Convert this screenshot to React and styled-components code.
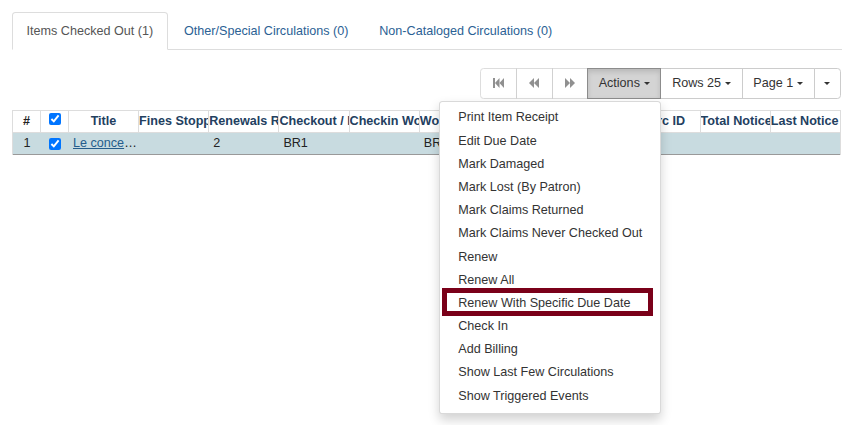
import React from 'react';
import styled, { createGlobalStyle, css } from 'styled-components';

const GlobalStyle = createGlobalStyle`
  html, body { margin: 0; padding: 0; background: #fff; }
  body {
    font-family: "Liberation Sans", Arial, sans-serif;
    font-size: 12.6px;
    line-height: 18px;
    color: #333;
  }
  * { box-sizing: border-box; }
`;

const Page = styled.div`
  position: relative;
  min-height: 425px;
  padding: 12px 4px 0 12px;
`;

const Tabs = styled.ul`
  display: flex;
  list-style: none;
  margin: 0;
  padding: 0;
  border-bottom: 1px solid #ddd;
`;

const Tab = styled.li`
  margin-right: 1.8px;
  margin-bottom: -1px;
  padding: 9px 13.5px;
  line-height: 18px;
  border: 1px solid transparent;
  border-radius: 3.6px 3.6px 0 0;
  color: #2b6194;
  ${(p) =>
    p.$active &&
    css`
      color: #555;
      background: #fff;
      border-color: #ddd #ddd transparent;
    `}
`;

const Toolbar = styled.div`
  position: relative;
  z-index: 5;
  display: flex;
  justify-content: flex-end;
  margin-top: 18px;
  padding-right: 1px;
`;

const BtnGroup = styled.div`
  display: flex;
`;

const Slot = styled.div`
  position: relative;
  display: flex;
  margin-left: ${(p) => (p.$first ? '0' : '-1px')};
  z-index: ${(p) => (p.$raised ? 2 : 1)};
`;

const Btn = styled.button`
  font: inherit;
  line-height: 18px;
  padding: 5.4px ${(p) => p.$px || '10.8px'};
  border: 1px solid #ccc;
  background: #fff;
  color: #333;
  display: flex;
  align-items: center;
  gap: 3.6px;
  border-radius: ${(p) =>
    p.$first ? '3.6px 0 0 3.6px' : p.$last ? '0 3.6px 3.6px 0' : '0'};
  ${(p) =>
    p.$disabled &&
    css`
      opacity: 0.65;
    `}
  ${(p) =>
    p.$active &&
    css`
      background: #d4d4d4;
      border-color: #8c8c8c;
      box-shadow: inset 0 3px 5px rgba(0, 0, 0, 0.125);
    `}
`;

const Caret = styled.span`
  display: inline-block;
  width: 0;
  height: 0;
  margin-top: 1px;
  border-top: 3.6px solid;
  border-left: 3.6px solid transparent;
  border-right: 3.6px solid transparent;
`;

const Menu = styled.ul`
  position: absolute;
  top: calc(100% + 2.5px);
  right: 0;
  z-index: 10;
  list-style: none;
  margin: 0;
  padding: 4.5px 0;
  background: #fff;
  border: 1px solid rgba(0, 0, 0, 0.15);
  border-radius: 3.6px;
  box-shadow: 0 5.4px 10.8px rgba(0, 0, 0, 0.175);
  white-space: nowrap;
`;

const MenuItem = styled.li`
  position: relative;
  padding: 2.7px 18px 2.7px 18.5px;
  line-height: 17.8px;
  color: #333;
  ${(p) =>
    p.$highlight &&
    css`
      &::after {
        content: '';
        position: absolute;
        left: 2px;
        right: 7px;
        top: -4px;
        bottom: -1px;
        border: 5px solid #7a0019;
      }
    `}
`;

const COLS = '28px 28px 70px repeat(10, 70.2px)';

const Table = styled.div`
  margin-top: 11.4px;
  width: 829px;
  border-left: 1px solid #ddd;
  border-right: 1px solid #ddd;
`;

const HeaderRow = styled.div`
  display: grid;
  grid-template-columns: ${COLS};
  height: 22px;
  border-top: 1px solid #ddd;
`;

const HeadCell = styled.div`
  font-weight: bold;
  color: ${(p) => (p.$dark ? '#222' : '#23405f')};
  text-align: center;
  white-space: nowrap;
  overflow: hidden;
  line-height: 21px;
  border-right: ${(p) => (p.$last ? 'none' : '1px solid #ddd')};
  display: flex;
  justify-content: ${(p) => (p.$center ? 'center' : 'flex-start')};
  align-items: ${(p) => (p.$box ? 'flex-start' : 'stretch')};
  padding-top: ${(p) => (p.$box ? '2px' : '0')};
`;

const DataRow = styled.div`
  display: grid;
  grid-template-columns: ${COLS};
  height: 23px;
  background: #c8dbe0;
  border-top: 1px solid #ddd;
  border-bottom: 1px solid #999;
`;

const Cell = styled.div`
  white-space: nowrap;
  overflow: hidden;
  text-overflow: ellipsis;
  line-height: 21px;
  color: #222;
  padding: 0 ${(p) => (p.$tight ? '2px' : '4px')} 0 4px;
  text-align: ${(p) => (p.$center ? 'center' : 'left')};
  display: ${(p) => (p.$box ? 'flex' : 'block')};
  justify-content: center;
  align-items: center;
`;

const TitleLink = styled.a`
  color: #255d8c;
  text-decoration: underline;
`;

const Check = styled.input`
  width: 12px;
  height: 12px;
  margin: 0;
  accent-color: #0075ff;
`;

const NavIcon = ({ kind }) => {
  const fill = '#555';
  if (kind === 'first')
    return (
      <svg width="11" height="10" viewBox="0 0 11 10">
        <rect x="0" y="0" width="2" height="10" fill={fill} />
        <polygon points="2,5 6.5,0 6.5,10" fill={fill} />
        <polygon points="6.5,5 11,0 11,10" fill={fill} />
      </svg>
    );
  if (kind === 'prev')
    return (
      <svg width="10" height="10" viewBox="0 0 10 10">
        <polygon points="0,5 5,0 5,10" fill={fill} />
        <polygon points="5,5 10,0 10,10" fill={fill} />
      </svg>
    );
  return (
    <svg width="10" height="10" viewBox="0 0 10 10">
      <polygon points="10,5 5,0 5,10" fill={fill} />
      <polygon points="5,5 0,0 0,10" fill={fill} />
    </svg>
  );
};

const actions = [
  'Print Item Receipt',
  'Edit Due Date',
  'Mark Damaged',
  'Mark Lost (By Patron)',
  'Mark Claims Returned',
  'Mark Claims Never Checked Out',
  'Renew',
  'Renew All',
  'Renew With Specific Due Date',
  'Check In',
  'Add Billing',
  'Show Last Few Circulations',
  'Show Triggered Events',
];

const headers = [
  'Fines Stopped',
  'Renewals Remaining',
  'Checkout / Renewal Library',
  'Checkin Workstation',
  'Workstation',
  'Due Date',
  'Circ Lib',
  'Circ ID',
  'Total Notices',
  'Last Notice',
];

const rowValues = ['', '2', 'BR1', '', 'BR1', '', '', '', '', ''];

export default function App() {
  return (
    <>
      <GlobalStyle />
      <Page>
        <Tabs>
          <Tab $active>Items Checked Out (1)</Tab>
          <Tab>Other/Special Circulations (0)</Tab>
          <Tab>Non-Cataloged Circulations (0)</Tab>
        </Tabs>

        <Toolbar>
          <BtnGroup>
            <Slot $first>
              <Btn $first $disabled $px="12px">
                <NavIcon kind="first" />
              </Btn>
            </Slot>
            <Slot>
              <Btn $disabled $px="12.5px">
                <NavIcon kind="prev" />
              </Btn>
            </Slot>
            <Slot>
              <Btn $disabled $px="12px">
                <NavIcon kind="next" />
              </Btn>
            </Slot>
            <Slot $raised>
              <Btn $active>
                Actions <Caret />
              </Btn>
              <Menu>
                {actions.map((a) => (
                  <MenuItem key={a} $highlight={a === 'Renew With Specific Due Date'}>
                    {a}
                  </MenuItem>
                ))}
              </Menu>
            </Slot>
            <Slot>
              <Btn>
                Rows 25 <Caret />
              </Btn>
            </Slot>
            <Slot>
              <Btn>
                Page 1 <Caret />
              </Btn>
            </Slot>
            <Slot>
              <Btn $last $px="9.7px">
                <Caret />
              </Btn>
            </Slot>
          </BtnGroup>
        </Toolbar>

        <Table>
          <HeaderRow>
            <HeadCell $center $dark>#</HeadCell>
            <HeadCell $center $box>
              <Check type="checkbox" checked readOnly />
            </HeadCell>
            <HeadCell $center>Title</HeadCell>
            {headers.map((h, i) => (
              <HeadCell key={h} $center={h === 'Circ ID'} $last={i === headers.length - 1}>
                {h}
              </HeadCell>
            ))}
          </HeaderRow>
          <DataRow>
            <Cell $center>1</Cell>
            <Cell $box>
              <Check type="checkbox" checked readOnly />
            </Cell>
            <Cell $tight>
              <TitleLink href="#">Le concert des oiseaux</TitleLink>
            </Cell>
            {rowValues.map((v, i) => (
              <Cell key={i}>{v}</Cell>
            ))}
          </DataRow>
        </Table>
      </Page>
    </>
  );
}
